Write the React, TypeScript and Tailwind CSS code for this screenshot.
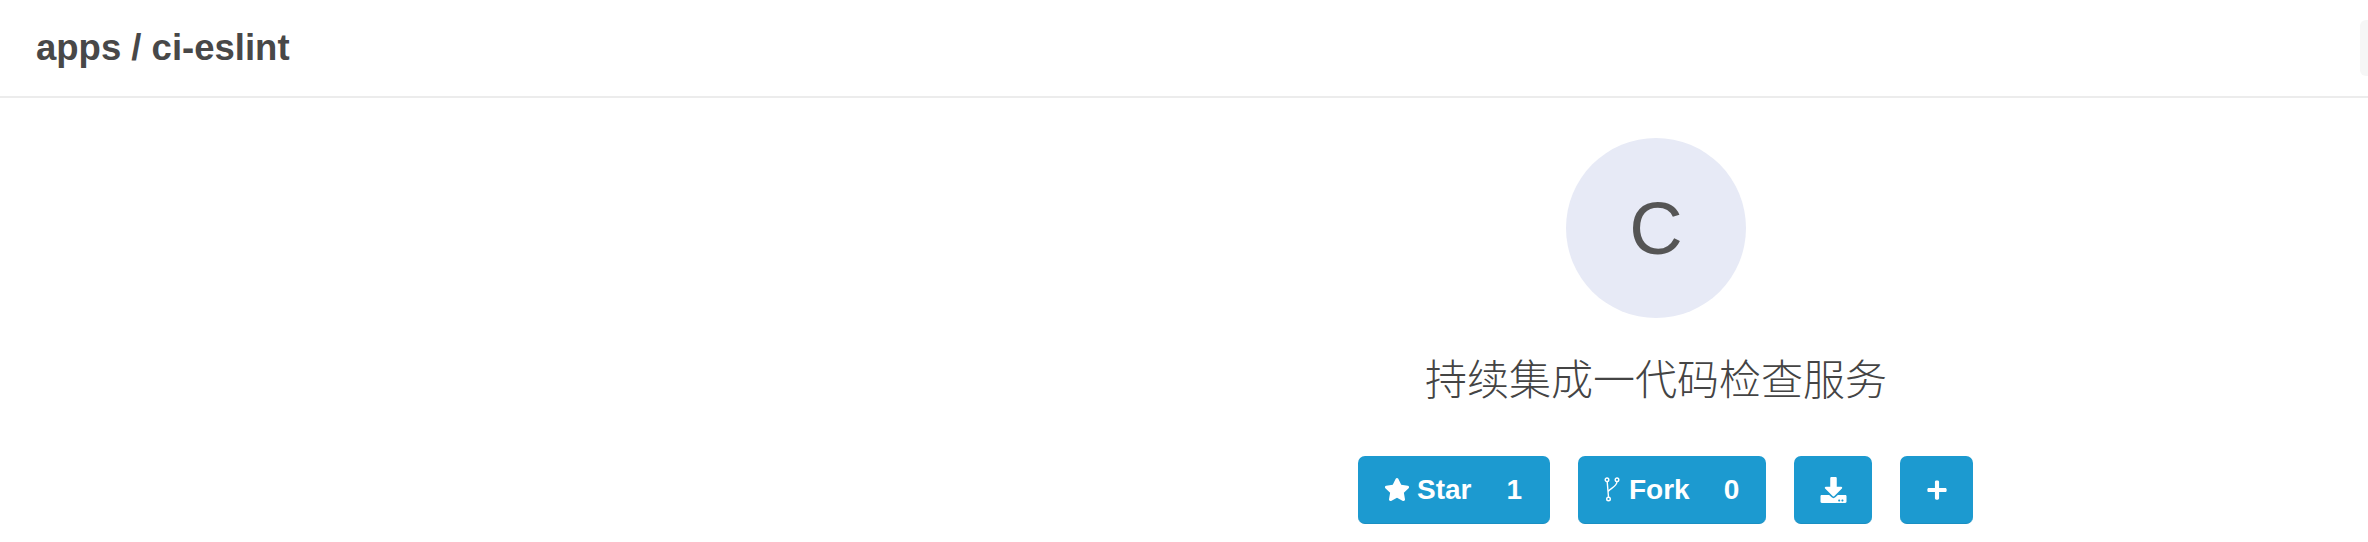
import { FaDownload, FaPlus, FaStar } from 'react-icons/fa';

function ForkIcon() {
  return (
    <svg viewBox="0 0 16 25" className="h-[25px] w-[16px]" fill="none" stroke="currentColor" strokeWidth="1.4">
      <circle cx="3" cy="2.800" r="1.800" />
      <circle cx="13" cy="2.800" r="1.800" />
      <circle cx="4.500" cy="22" r="1.800" />
      <path d="M3.200 4.600L4.500 20.200M13 4.600C13 10 6 11 4.200 14.500" />
    </svg>
  );
}

const buttonClass =
  'flex h-[68px] items-center rounded-[7px] border-b border-[#1a8fc2] bg-[#1c9ad0] text-[28px] font-bold text-white';

export default function App() {
  return (
    <div className="h-[542px] w-full overflow-hidden bg-white font-['Liberation_Sans','Noto_Sans_CJK_SC',sans-serif] text-[#444]">
      <header className="flex h-[98px] items-center justify-between border-b-2 border-[#ececec] pl-9">
        <h1 className="text-[36.500px] font-bold text-[#484848]">apps / ci-eslint</h1>
        <div className="h-[56px] w-2 rounded-l-md bg-[#f6f6f6]" />
      </header>

      <main className="flex flex-col pt-10">
        <div className="ml-[1416px] flex w-[480px] flex-col items-center">
          <div className="flex h-[180px] w-[180px] items-center justify-center rounded-full bg-[#e7eaf6] text-[74px] text-[#555]">
            C
          </div>
          <p className="mt-[37px] text-[42px] leading-[52px] font-light whitespace-nowrap text-[#444]">
            持续集成一代码检查服务
          </p>
        </div>

        <div className="mt-[49px] ml-[1358px] flex gap-[28px]">
          <button className={`${buttonClass} w-[192px] pl-[26px]`}>
            <FaStar className="mr-[7px] h-[25px] w-[26px]" />
            <span>Star</span>
            <span className="ml-[35px]">1</span>
          </button>
          <button className={`${buttonClass} w-[188px] pl-[26px]`}>
            <ForkIcon />
            <span className="ml-[9px]">Fork</span>
            <span className="ml-[34px]">0</span>
          </button>
          <button className={`${buttonClass} w-[78px] justify-center`}>
            <FaDownload className="h-[26px] w-[27px]" />
          </button>
          <button className={`${buttonClass} w-[73px] justify-center`}>
            <FaPlus className="h-[22px] w-[22px]" />
          </button>
        </div>
      </main>
    </div>
  );
}
